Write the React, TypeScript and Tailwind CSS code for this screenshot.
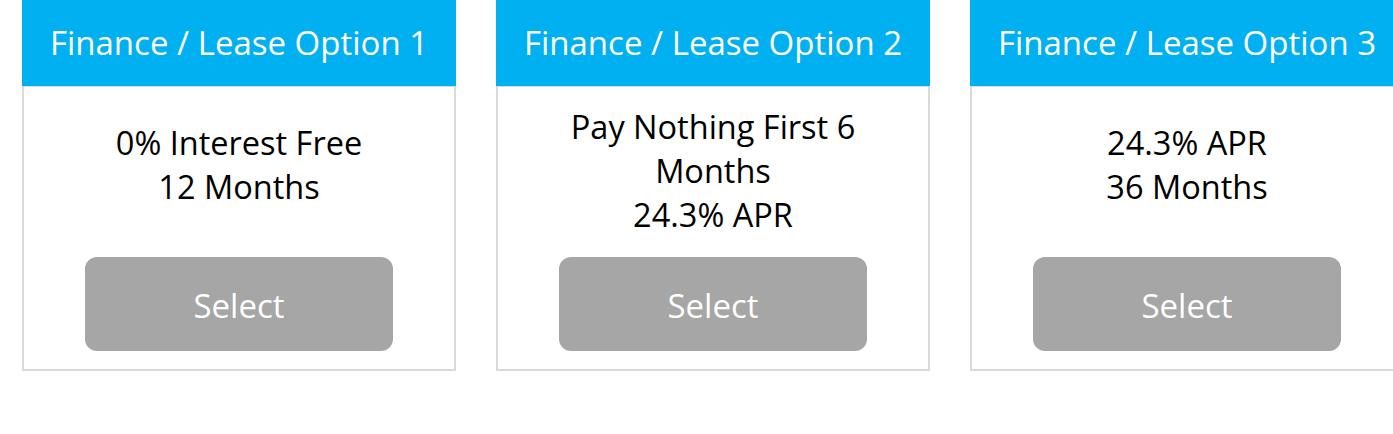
import React from "react";

interface Option {
  title: string;
  lines: string[];
  offset: string;
}

const options: Option[] = [
  { title: "Finance / Lease Option 1", lines: ["0% Interest Free", "12 Months"], offset: "pt-[34px]" },
  { title: "Finance / Lease Option 2", lines: ["Pay Nothing First 6", "Months", "24.3% APR"], offset: "pt-[18px]" },
  { title: "Finance / Lease Option 3", lines: ["24.3% APR", "36 Months"], offset: "pt-[34px]" },
];

function OptionCard({ option }: { option: Option }) {
  return (
    <div className="w-[434px] shrink-0 flex flex-col">
      {/* Header */}
      <div className="h-[86px] bg-[#00b0f0] flex items-center justify-center text-white text-[33px]">
        {option.title}
      </div>

      {/* Body */}
      <div className="h-[285px] border-x-2 border-b-2 border-t border-[#d9d9d9] flex flex-col items-center">
        <div className={`${option.offset} text-center text-black text-[32.5px] leading-[44px]`}>
          {option.lines.map((line) => (
            <div key={line}>{line}</div>
          ))}
        </div>
        <button className="mt-auto mb-[18px] w-[308px] h-[94px] pt-[3px] rounded-[12px] bg-[#a6a6a6] text-white text-[33px]">
          Select
        </button>
      </div>
    </div>
  );
}

export default function App() {
  return (
    <div
      className="w-[1393px] h-[434px] overflow-hidden bg-white flex gap-[40px] pl-[22px]"
      style={{ fontFamily: '"Open Sans", "Noto Sans", sans-serif' }}
    >
      {options.map((option) => (
        <OptionCard key={option.title} option={option} />
      ))}
    </div>
  );
}
